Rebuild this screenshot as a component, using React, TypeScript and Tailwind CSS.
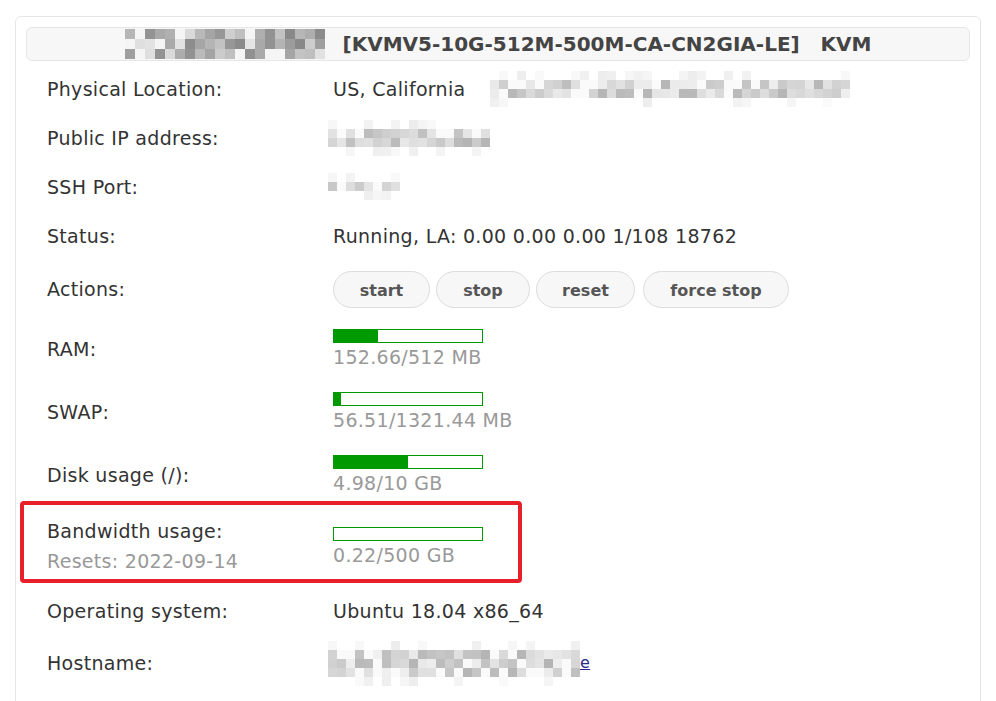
import React from 'react';

const FONT = { fontFamily: '"DejaVu Sans", Verdana, sans-serif' };

// blurred-out text, drawn as a pixel mosaic
const Mosaic = ({
  cols,
  rows,
  cell = 9,
  seed = 1,
  dark = false,
}: {
  cols: number;
  rows: number;
  cell?: number;
  seed?: number;
  dark?: boolean;
}) => {
  let s = seed * 9301 + 49297;
  const rnd = () => {
    s = (s * 9301 + 49297) % 233280;
    return s / 233280;
  };
  const cells: React.ReactNode[] = [];
  for (let r = 0; r < rows; r++) {
    for (let c = 0; c < cols; c++) {
      const edge = r === 0 || r === rows - 1;
      const v = rnd();
      let g: number;
      if (dark) {
        g = v < 0.15 ? 245 : Math.round(120 + v * 110);
      } else if (edge) {
        g = v < 0.6 ? 255 : Math.round(215 + v * 35);
      } else {
        g = v < 0.2 ? 250 : Math.round(165 + v * 75);
      }
      if (g >= 252) continue;
      cells.push(
        <rect
          key={r + '-' + c}
          x={c * cell}
          y={r * cell}
          width={cell}
          height={cell}
          fill={`rgb(${g},${g},${g})`}
        />
      );
    }
  }
  return (
    <svg width={cols * cell} height={rows * cell} className="block shrink-0">
      {cells}
    </svg>
  );
};

const Bar = ({ pct }: { pct: number }) => (
  <div className="h-[14px] w-[150px] border border-[#009900] bg-white">
    <div className="h-full bg-[#009900]" style={{ width: pct + '%' }} />
  </div>
);

const Row = ({
  label,
  h,
  children,
}: {
  label: React.ReactNode;
  h: string;
  children: React.ReactNode;
}) => (
  <div className={'flex items-center ' + h}>
    <div className="w-[286px] shrink-0">{label}</div>
    <div className="flex min-w-0 items-center">{children}</div>
  </div>
);

const ActionButton = ({ children, w }: { children: React.ReactNode; w: string }) => (
  <button
    className={
      'h-[37px] rounded-full border border-[#dcdcdc] bg-[#f7f7f7] pt-[3px] text-[16px] font-bold tracking-normal text-[#555] ' +
      w
    }
  >
    {children}
  </button>
);

const Usage = ({ pct, text }: { pct: number; text: string }) => (
  <div className="flex flex-col gap-[3px]">
    <Bar pct={pct} />
    <div className="leading-[22px] text-[#999]">{text}</div>
  </div>
);

export default function App() {
  return (
    <div className="min-h-[701px] bg-white pt-4" style={FONT}>
      <div className="relative mx-[15px] h-[720px] rounded-md border border-[#e6e6e6] px-[10px] pt-[10px] text-[19px] tracking-[0.3px] text-[#333]">
        <div className="flex h-[34px] items-center justify-center gap-[18px] rounded-md border border-[#e6e6e6] bg-[#f7f7f7] tracking-normal">
          <Mosaic cols={20} rows={3} cell={10} seed={7} dark />
          <span className="text-[20px] font-bold text-[#444] whitespace-pre">
            [KVMV5-10G-512M-500M-CA-CN2GIA-LE]   KVM
          </span>
        </div>

        <div className="mt-[3px] pl-[21px] leading-[22px]">
          <Row label="Physical Location:" h="h-[49px]">
            <span>US, California</span>
            <span className="ml-[25px]">
              <Mosaic cols={40} rows={4} seed={3} />
            </span>
          </Row>
          <Row label="Public IP address:" h="h-[49px]">
            <span className="-ml-[5px]">
              <Mosaic cols={18} rows={4} seed={11} />
            </span>
          </Row>
          <Row label="SSH Port:" h="h-[49px]">
            <span className="-ml-[5px]">
              <Mosaic cols={8} rows={3} seed={5} />
            </span>
          </Row>
          <Row label="Status:" h="h-[50px]">
            <span>Running, LA: 0.00 0.00 0.00 1/108 18762</span>
          </Row>
          <Row label="Actions:" h="h-[56px]">
            <div className="flex gap-[6px]">
              <ActionButton w="w-[97px]">start</ActionButton>
              <ActionButton w="w-[94px]">stop</ActionButton>
              <ActionButton w="w-[99px]">reset</ActionButton>
              <ActionButton w="w-[146px] ml-[2px]">force stop</ActionButton>
            </div>
          </Row>
          <Row label="RAM:" h="h-[63px]">
            <Usage pct={30} text="152.66/512 MB" />
          </Row>
          <Row label="SWAP:" h="h-[63px]">
            <Usage pct={4.5} text="56.51/1321.44 MB" />
          </Row>
          <Row label="Disk usage (/):" h="h-[63px]">
            <Usage pct={50} text="4.98/10 GB" />
          </Row>
          <Row
            label={
              <div className="flex flex-col gap-[8px]">
                <span>Bandwidth usage:</span>
                <span className="text-[#999]">Resets: 2022-09-14</span>
              </div>
            }
            h="h-[80px]"
          >
            <Usage pct={0} text="0.22/500 GB" />
          </Row>
          <Row label="Operating system:" h="h-[50px]">
            <span>Ubuntu 18.04 x86_64</span>
          </Row>
          <Row label="Hostname:" h="h-[54px]">
            <span className="-ml-[5px]">
              <Mosaic cols={28} rows={5} seed={17} />
            </span>
            <a href="#" className="text-[16px] text-[#2a2a8a] underline">
              e
            </a>
          </Row>
        </div>

        {/* red highlight drawn over the bandwidth row */}
        <div className="pointer-events-none absolute left-[4px] top-[484px] h-[82px] w-[502px] rounded-[4px] border-[4px] border-[#e8202a]" />
      </div>
    </div>
  );
}
